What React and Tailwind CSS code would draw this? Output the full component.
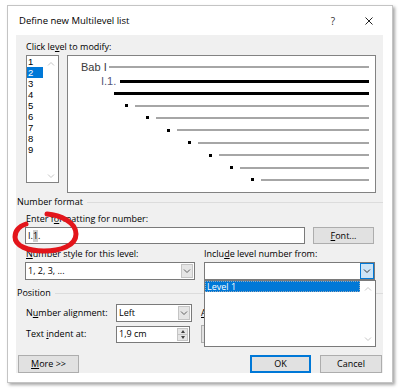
import React from 'react';

function Chevron({ up = false, className = '' }) {
  return (
    <svg width="8" height="5" viewBox="0 0 8 5" className={className}>
      <path d={up ? 'M1 4.5L4 1.5L7 4.5' : 'M1 0.5L4 3.5L7 0.5'} fill="none" stroke="currentColor" strokeWidth="1" />
    </svg>
  );
}

function Select({ value, width, active = false }) {
  return (
    <div className={`flex h-[18px] ${width} border border-[#7a7a7a] bg-white`}>
      <div className="flex flex-1 items-center pl-[2px] leading-[12px]">{value}</div>
      {active ? (
        <div className="flex w-[14px] items-center justify-center border border-[#0078d7] bg-[#cce4f7] text-[#333]">
          <Chevron />
        </div>
      ) : (
        <div className="m-px flex w-[12px] items-center justify-center border border-[#c4c4c4] bg-[#e5e5e5] text-[#606060]">
          <Chevron />
        </div>
      )}
    </div>
  );
}

const levels = ['1', '2', '3', '4', '5', '6', '7', '8', '9'];

// indented bullet rows of the preview
const bulletRows = ['pl-[57px]', 'pl-[78px]', 'pl-[99px]', 'pl-[120px]', 'pl-[141px]', 'pl-[162px]', 'pl-[183px]'];

export default function App() {
  return (
    <div className="relative h-[392px] w-[401px] overflow-hidden bg-white pl-[7px] pt-[5px] font-['Open_Sans',sans-serif] leading-[12px] text-black">
      {/* Dialog window */}
      <div className="flex h-[378px] w-[386px] flex-col border border-[#c4c4c4] bg-white shadow-[2px_2px_3px_rgba(0,0,0,0.35)]">
        {/* Title bar */}
        <div className="flex h-[29px] shrink-0 items-center pl-[11px] pr-[19px] text-[9.5px]">
          <span>Define new Multilevel list</span>
          <span className="ml-auto text-[10px] text-[#333]">?</span>
          <svg width="8" height="8" viewBox="0 0 8 8" className="ml-[30px]">
            <path d="M0.5 0.5L7.5 7.5M7.5 0.5L0.5 7.5" stroke="#222" strokeWidth="1" />
          </svg>
        </div>

        {/* Body */}
        <div className="relative mb-[9px] ml-[8px] mr-[9px] flex-1 bg-[#f0f0f0] text-[9px]">
          <div className="ml-[10px] mt-[6px] flex h-[12px] items-center">
            Click le<u>v</u>el to modify:
          </div>

          <div className="mt-[2px] flex pl-[10px] pr-[7px]">
            {/* Level list */}
            <div className="flex h-[128px] w-[33px] border border-[#828282] bg-white">
              <div className="w-[16px] font-['Liberation_Sans',sans-serif]">
                {levels.map((l) => (
                  <div
                    key={l}
                    className={`h-[11px] pl-[1px] text-[9.5px] leading-[11px] ${l === '2' ? 'bg-[#0078d7] text-white' : ''}`}
                  >
                    {l}
                  </div>
                ))}
              </div>
              <div className="flex flex-1 flex-col items-center justify-between pb-[3px] pt-[5px] text-[#c6c6c6]">
                <Chevron up />
                <Chevron />
              </div>
            </div>

            {/* Preview */}
            <div className="ml-[8px] h-[138px] flex-1 border border-[#828282] bg-white pr-[6px] pt-[5px] font-['Liberation_Sans',sans-serif]">
              <div className="flex h-[12px] items-center pl-[13px]">
                <span className="text-[11px] leading-none text-[#3a3a3a]">Bab I</span>
                <div className="ml-[2px] h-[2px] flex-1 bg-[#a6a6a6]" />
              </div>
              <div className="mt-[2px] flex h-[12px] items-center pl-[33px]">
                <span className="text-[11px] leading-none text-[#55577a]">I.1.</span>
                <div className="ml-[4px] h-[3px] flex-1 bg-black" />
              </div>
              <div className="flex h-[12.4px] items-center pl-[46px]">
                <div className="h-[3px] flex-1 bg-black" />
              </div>
              {bulletRows.map((pl) => (
                <div key={pl} className={`flex h-[12.4px] items-center ${pl}`}>
                  <div className="h-[3px] w-[3px] bg-black" />
                  <div className="ml-[7px] h-[2px] flex-1 bg-[#a6a6a6]" />
                </div>
              ))}
            </div>
          </div>

          {/* Number format */}
          <div className="ml-[1px] mt-[3px] flex h-[12px] items-center">
            <span>Number format</span>
            <div className="ml-[4px] h-px flex-1 bg-[#dcdcdc]" />
          </div>
          <div className="ml-[10px] mt-[5px] flex h-[12px] items-center">
            Enter f<u>o</u>rmatting for number:
          </div>
          <div className="mt-[2px] flex pl-[9px]">
            <div className="flex h-[17px] w-[280px] items-center border border-[#7a7a7a] bg-white pl-[2px]">
              <span>I.</span>
              <span className="bg-[#cfcfcf]">1</span>
              <span>.</span>
            </div>
            <div className="ml-[8px] flex h-[17px] w-[61px] items-center justify-center border border-[#adadad] bg-[#e1e1e1]">
              <span>
                <u>F</u>ont...
              </span>
            </div>
          </div>
          <div className="mt-[4px] flex h-[12px] items-center pl-[10px]">
            <div className="w-[178px]">
              <u>N</u>umber style for this level:
            </div>
            <div>
              Inclu<u>d</u>e level number from:
            </div>
          </div>
          <div className="mt-[2px] flex pl-[9px]">
            <Select value="1, 2, 3, ..." width="w-[170px]" />
            <div className="ml-[9px]">
              <Select value="" width="w-[171px]" active />
            </div>
          </div>

          {/* Position */}
          <div className="ml-[1px] mt-[7px] flex h-[12px] items-center">
            <span>Position</span>
            <div className="ml-[4px] h-px flex-1 bg-[#dcdcdc]" />
          </div>
          <div className="mt-[5px] flex items-center pl-[10px]">
            <div className="w-[90px]">
              N<u>u</u>mber alignment:
            </div>
            <Select value="Left" width="w-[76px]" />
            <div className="ml-[9px]">
              <u>A</u>ligned at:
            </div>
          </div>
          <div className="mt-[3px] flex items-center pl-[10px]">
            <div className="w-[90px]">
              Text <u>i</u>ndent at:
            </div>
            <div className="flex h-[17px] w-[74px] border border-[#7a7a7a] bg-white">
              <div className="flex flex-1 items-center pl-[2px]">1,9 cm</div>
              <div className="m-px flex w-[11px] flex-col border border-[#c4c4c4] bg-[#e5e5e5]">
                <div className="flex flex-1 items-center justify-center border-b border-[#c4c4c4]">
                  <div className="h-0 w-0 border-x-[2.5px] border-b-[3px] border-x-transparent border-b-[#404040]" />
                </div>
                <div className="flex flex-1 items-center justify-center">
                  <div className="h-0 w-0 border-x-[2.5px] border-t-[3px] border-x-transparent border-t-[#404040]" />
                </div>
              </div>
            </div>
            <div className="ml-[11px] h-[18px] w-[80px] border border-[#adadad] bg-[#e1e1e1]" />
          </div>

          {/* Buttons */}
          <div className="mt-[12px] flex pl-[2px] pr-[1px]">
            <div className="flex h-[18px] w-[61px] items-center justify-center border border-[#adadad] bg-[#e1e1e1]">
              <span>
                <u>M</u>ore &gt;&gt;
              </span>
            </div>
            <div className="ml-auto flex h-[18px] w-[61px] items-center justify-center border border-[#0078d7] bg-[#e1e1e1] shadow-[inset_0_0_0_1px_#0078d7]">
              OK
            </div>
            <div className="ml-[9px] flex h-[18px] w-[62px] items-center justify-center border border-[#adadad] bg-[#e1e1e1]">
              Cancel
            </div>
          </div>

          {/* Open drop-down list */}
          <div className="absolute left-[188px] top-[245px] flex h-[67px] w-[172px] border border-[#7a7a7a] bg-white">
            <div className="flex-1">
              <div className="h-[11px] border border-dotted border-[#9ab] bg-[#0078d7] pl-[1px] leading-[9px] text-white">
                Level 1
              </div>
            </div>
            <div className="flex w-[15px] flex-col items-center justify-between pb-[4px] pt-[5px] text-[#c6c6c6]">
              <Chevron up />
              <Chevron />
            </div>
          </div>
        </div>
      </div>

      {/* Red annotation circle */}
      <svg className="pointer-events-none absolute left-0 top-0" width="401" height="392" viewBox="0 0 401 392">
        <path
          d="M47 214 C60 215 76 222 76 234 C76 246 60 251 44 251 C28 251 15 246 15 237 C15 230 20 226 26 224"
          fill="none"
          stroke="#e3151b"
          strokeWidth="5"
          strokeLinecap="round"
        />
      </svg>
    </div>
  );
}
